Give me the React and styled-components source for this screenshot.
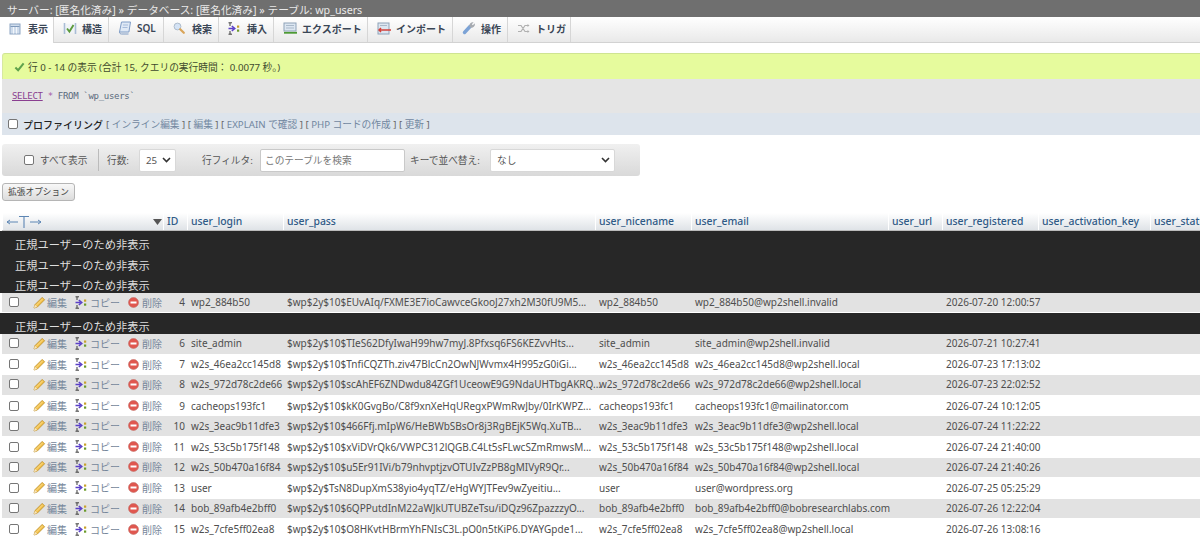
import React from "react";
import styled, { createGlobalStyle } from "styled-components";

const FONT = `"Noto Sans", "Noto Sans CJK JP", sans-serif`;

const Global = createGlobalStyle`
  html, body { margin: 0; padding: 0; background: #fff; overflow: hidden; height: 546px; }
  body { font-family: ${FONT}; font-size: 10px; color: #444; }
`;

const Page = styled.div`
  width: 1200px;
  height: 546px;
  overflow: hidden;
  display: flex;
  flex-direction: column;
`;

const TopBar = styled.div`
  height: 17px;
  background: #6f6f6f;
  color: #e9e9e9;
  font-size: 10.7px;
  line-height: 20px;
  padding-left: 7px;
  white-space: nowrap;
  overflow: hidden;
  flex: none;
`;

const Tabs = styled.nav`
  height: 26px;
  flex: none;
  display: flex;
  background: linear-gradient(#ffffff, #e9e9e9);
  border-bottom: 1px solid #d2d2d2;
  box-sizing: border-box;
`;

const Tab = styled.div`
  width: ${(p) => p.$w}px;
  box-sizing: border-box;
  display: flex;
  align-items: center;
  padding: 0 0 3px 9px;
  font-size: 10px;
  font-weight: 600;
  color: #3a4656;
  white-space: nowrap;
  border-right: 1px solid #d6d6d6;
  background: ${(p) => (p.$active ? "#fff" : "transparent")};
  height: ${(p) => (p.$active ? "26px" : "25px")};
`;

const TabIcon = styled.span`
  width: 19px;
  flex: none;
  display: flex;
  align-items: center;
`;

const Notice = styled.div`
  margin: 10px 0 0 2px;
  height: 26px;
  flex: none;
  box-sizing: border-box;
  background: #e6fb9d;
  border-top: 1px solid #cfe492;
  border-left: 1px solid #d7e8a0;
  border-radius: 3px 0 0 0;
  display: flex;
  align-items: center;
  gap: 3px;
  padding-left: 11px;
  font-size: 9.7px;
  color: #3f4a2d;
`;

const SqlBox = styled.div`
  margin-left: 2px;
  height: 34px;
  flex: none;
  background: #e5e5e5;
  display: flex;
  align-items: center;
  padding-left: 10px;
  font-family: "DejaVu Sans Mono", monospace;
  font-size: 9px;
  letter-spacing: -0.3px;
  color: #5a6a7d;
  gap: 5px;
`;

const Keyword = styled.span`
  color: #8a3f90;
  text-decoration: underline;
`;

const Star = styled.span`
  color: #a45aa8;
`;

const Profiling = styled.div`
  margin-left: 2px;
  height: 22px;
  flex: none;
  background: #dde4ec;
  display: flex;
  align-items: center;
  padding-left: 6px;
  gap: 3px;
  font-size: 9.7px;
  color: #333;
`;

const Box = styled.span`
  width: 10px;
  height: 10px;
  box-sizing: border-box;
  flex: none;
  display: inline-block;
  border: 1px solid #767676;
  border-radius: 2px;
  background: #fff;
`;

const ProfLabel = styled.span`
  margin-left: 2px;
  font-size: 10px;
  font-weight: 500;
  color: #222;
`;

const LinkText = styled.span`
  color: #7187a0;
`;

const Bracket = styled.span`
  color: #666;
`;

const FilterBar = styled.div`
  margin: 9px 0 0 2px;
  width: 638px;
  height: 32px;
  flex: none;
  box-sizing: border-box;
  border-radius: 3px;
  background: linear-gradient(#f0f0f0, #d9d9d9);
  display: flex;
  align-items: center;
  font-size: 9.7px;
  color: #555;
  white-space: nowrap;
`;

const ShowAll = styled.label`
  margin-left: 22px;
  display: flex;
  align-items: center;
  gap: 6px;
  width: 74px;
  height: 22px;
  border-right: 1px solid #bbb;
`;

const FilterLabel = styled.span`
  margin-left: ${(p) => p.$ml}px;
  width: ${(p) => p.$w}px;
`;

const FakeSelect = styled.div`
  width: ${(p) => p.$w}px;
  height: 23px;
  box-sizing: border-box;
  background: #fff;
  border: 1px solid #d8d8d8;
  border-radius: 2px;
  display: flex;
  align-items: center;
  justify-content: space-between;
  padding: 0 4px 0 6px;
  color: #555;
`;

const FakeInput = styled.div`
  width: 145px;
  height: 23px;
  box-sizing: border-box;
  background: #fff;
  border: 1px solid #c9c9c9;
  border-radius: 2px;
  display: flex;
  align-items: center;
  padding-left: 4px;
  color: #777;
`;

const OptionsButton = styled.div`
  margin: 7px 0 0 2px;
  width: 73px;
  height: 18px;
  flex: none;
  box-sizing: border-box;
  border: 1px solid #b5b5b5;
  border-radius: 3px;
  background: linear-gradient(#f8f8f8, #dcdcdc);
  font-size: 8.7px;
  line-height: 16px;
  text-align: center;
  color: #444;
  white-space: nowrap;
`;

const COLS = "161px 24px 96px 312px 96px 197px 54px 96px 112px 60px";

const TableWrap = styled.div`
  margin-top: 12px;
  flex: none;
  width: 1200px;
`;

const HeadRow = styled.div`
  display: grid;
  grid-template-columns: ${COLS};
  margin-left: 2px;
  height: 17px;
  border-bottom: 1px solid #bbb;
`;

const HeadCell = styled.div`
  background: linear-gradient(#ffffff, #dfe3e7);
  border-left: 1px solid #fff;
  padding-left: 3px;
  box-sizing: border-box;
  font-size: 10.4px;
  font-weight: 500;
  line-height: 17px;
  color: #2f5a86;
  white-space: nowrap;
  overflow: hidden;
`;

const ArrowCell = styled(HeadCell)`
  display: flex;
  align-items: center;
  justify-content: space-between;
  padding: 0 1px 0 3px;
`;

const Row = styled.div`
  display: grid;
  grid-template-columns: ${COLS};
  height: 20.6px;
  margin-left: 2px;
  padding-bottom: 1px;
  align-items: center;
  box-sizing: border-box;
  background: ${(p) => (p.$odd ? "#e2e2e2" : "#fff")};
  border-bottom: ${(p) => (p.$odd ? "1px solid #fff" : "0")};
  font-size: 10px;
  color: #4e4e4e;
  white-space: nowrap;
`;

const HiddenRow = styled.div`
  height: 20.6px;
  background: #272727;
  color: #dedede;
  font-size: 11.25px;
  line-height: 20px;
  padding: 4px 0 0 15px;
  box-sizing: border-box;
  overflow: hidden;
  white-space: nowrap;
`;

const Actions = styled.div`
  display: flex;
  align-items: center;
  padding-left: 7px;
  height: 100%;
`;

const Action = styled.span`
  display: flex;
  align-items: center;
  margin-left: ${(p) => p.$ml}px;
  gap: ${(p) => p.$gap}px;
  color: #75869a;
  svg { flex: none; }
`;

const IdCell = styled.div`
  text-align: right;
  padding-right: 2px;
`;

const Cell = styled.div`
  padding-left: 4px;
`;

const Check = () => (
  <svg width="11" height="11" viewBox="0 0 12 12">
    <path d="M1.5 7 L4.5 10 L10.5 2.5" fill="none" stroke="#5fa24c" strokeWidth="2.2" />
  </svg>
);

const IconTable = () => (
  <svg width="12" height="12" viewBox="0 0 12 12">
    <rect x="1" y="1" width="10" height="10" fill="#cfdcec" stroke="#8ea6c4" />
    <path d="M1.5 3.5h9" stroke="#7f99ba" />
    <path d="M4.5 4v6.5M7.5 4v6.5" stroke="#f2f6fb" fill="none" />
  </svg>
);
const IconStruct = () => (
  <svg width="14" height="13" viewBox="0 0 14 13">
    <path d="M1.5 1v11M12.5 1v11" stroke="#a9bdd6" strokeWidth="1.6" />
    <rect x="3" y="2" width="8" height="9" fill="#f0f4f8" />
    <path d="M4 6.5l2.4 3L10.5 3" fill="none" stroke="#5c9a3c" strokeWidth="1.9" />
  </svg>
);
const IconSql = () => (
  <svg width="13" height="14" viewBox="0 0 13 14">
    <path d="M3.5 1h9l-1.6 10H1.5z" fill="#dfe9f6" stroke="#7f9cc6" />
    <path d="M1.5 11c0 1.5 1 2 2 2h7" stroke="#7f9cc6" fill="none" />
    <path d="M5 4h5M4.5 6.5h5" stroke="#a7bcdb" />
  </svg>
);
const IconSearch = () => (
  <svg width="12" height="12" viewBox="0 0 12 12">
    <circle cx="4.5" cy="4.5" r="3.4" fill="#d4e3f5" stroke="#aebccc" />
    <path d="M7.2 7.2l3.6 3.6" stroke="#d9a55a" strokeWidth="2.2" strokeLinecap="round" />
  </svg>
);
const IconInsert = () => (
  <svg width="12" height="13" viewBox="0 0 12 13">
    <path d="M.5 .8h3.5M.5 12.2h3.5M2 1v3M2 9v3" stroke="#3c3c3c" fill="none" />
    <path d="M.5 6.5h5M3.8 4l3 2.5-3 2.5" stroke="#5a3fc8" strokeWidth="1.5" fill="none" />
    <rect x="9" y="3.5" width="2.2" height="2.2" fill="#c8a22a" />
    <rect x="9" y="7.5" width="2.2" height="2.2" fill="#6a9a2a" />
  </svg>
);
const IconExport = () => (
  <svg width="15" height="13" viewBox="0 0 15 13">
    <rect x="1" y="1" width="12" height="8" fill="#dce6f1" stroke="#8ea2b8" />
    <path d="M3 3.5h8M3 6h8" stroke="#a9b9ca" />
    <path d="M1 10.8h13" stroke="#4d9a34" strokeWidth="1.8" />
  </svg>
);
const IconImport = () => (
  <svg width="15" height="13" viewBox="0 0 15 13">
    <rect x="1" y="1" width="11" height="11" fill="#dce6f1" stroke="#8ea2b8" />
    <path d="M3 3.5h7" stroke="#a9b9ca" />
    <path d="M2 8h12M4 6L2 8l2 2" fill="none" stroke="#d2403a" strokeWidth="1.5" />
  </svg>
);
const IconWrench = () => (
  <svg width="14" height="14" viewBox="0 0 14 14">
    <path d="M2.5 11.5L8 5.5" stroke="#7ca3d6" strokeWidth="3.4" strokeLinecap="round" />
    <path d="M7.5 5.5a3.4 3.4 0 0 1 4.2-4.2L9.8 3.2l1 1 2-1.9a3.4 3.4 0 0 1-4.6 4.1z" fill="#a6aab0" />
  </svg>
);
const IconTrigger = () => (
  <svg width="13" height="11" viewBox="0 0 13 11">
    <path d="M1 2.5h3l4 6h3M1 8.5h3l4-6h3" fill="none" stroke="#b0b0b0" strokeWidth="1.2" />
    <path d="M10.5 1l2 1.5-2 1.5M10.5 7l2 1.5-2 1.5" fill="#b0b0b0" />
  </svg>
);
const Pencil = () => (
  <svg width="13" height="13" viewBox="0 0 13 13">
    <path d="M1 12l.9-3.3L9.2 1.4l2.4 2.4L4.3 11.1z" fill="#f3c04a" stroke="#b98a22" strokeWidth=".8" />
    <path d="M1 12l.9-3.3 2.4 2.4z" fill="#f7e6c2" />
    <path d="M3 9.5L9.8 2.7" stroke="#fbe29a" strokeWidth=".8" />
  </svg>
);
const Del = () => (
  <svg width="11" height="11" viewBox="0 0 11 11">
    <circle cx="5.5" cy="5.5" r="5" fill="#e0574f" stroke="#c2706a" strokeWidth=".6" />
    <rect x="2.5" y="4.5" width="6" height="2" fill="#fff" />
  </svg>
);
const Chevron = () => (
  <svg width="9" height="6" viewBox="0 0 9 6">
    <path d="M1 1l3.5 3.5L8 1" fill="none" stroke="#333" strokeWidth="1.6" />
  </svg>
);
const TArrows = () => (
  <svg width="36" height="13" viewBox="0 0 36 13">
    <path d="M1 7h11M1 7l3-2M1 7l3 2M24 7h11M35 7l-3-2M35 7l-3 2" fill="none" stroke="#5d86b4" />
    <path d="M13 1.5h10M18 1.5V13" fill="none" stroke="#5d86b4" strokeWidth="1.1" />
  </svg>
);
const SortDown = () => (
  <svg width="9" height="6" viewBox="0 0 9 6">
    <path d="M0 0h9L4.5 6z" fill="#555" />
  </svg>
);

const TABS = [
  ["表示", 54, IconTable],
  ["構造", 55, IconStruct],
  ["SQL", 55, IconSql],
  ["検索", 55, IconSearch],
  ["挿入", 55, IconInsert],
  ["エクスポート", 94, IconExport],
  ["インポート", 85, IconImport],
  ["操作", 55, IconWrench],
  ["トリガ", 63, IconTrigger],
];

const COLUMNS = ["ID", "user_login", "user_pass", "user_nicename", "user_email", "user_url", "user_registered", "user_activation_key", "user_status"];

const ROWS = [
  null, null, null,
  [4, "wp2_884b50", "$wp$2y$10$EUvAIq/FXME3E7ioCawvceGkooJ27xh2M30fU9M5...", "wp2_884b50", "wp2_884b50@wp2shell.invalid", "2026-07-20 12:00:57"],
  null,
  [6, "site_admin", "$wp$2y$10$TIeS62DfyIwaH99hw7myJ.8Pfxsq6FS6KEZvvHts...", "site_admin", "site_admin@wp2shell.invalid", "2026-07-21 10:27:41"],
  [7, "w2s_46ea2cc145d8", "$wp$2y$10$TnfiCQZTh.ziv47BlcCn2OwNJWvmx4H995zG0iGi...", "w2s_46ea2cc145d8", "w2s_46ea2cc145d8@wp2shell.local", "2026-07-23 17:13:02"],
  [8, "w2s_972d78c2de66", "$wp$2y$10$scAhEF6ZNDwdu84ZGf1UceowE9G9NdaUHTbgAKRQ...", "w2s_972d78c2de66", "w2s_972d78c2de66@wp2shell.local", "2026-07-23 22:02:52"],
  [9, "cacheops193fc1", "$wp$2y$10$kK0GvgBo/C8f9xnXeHqURegxPWmRwJby/0IrKWPZ...", "cacheops193fc1", "cacheops193fc1@mailinator.com", "2026-07-24 10:12:05"],
  [10, "w2s_3eac9b11dfe3", "$wp$2y$10$466Ffj.mIpW6/HeBWbSBsOr8j3RgBEjK5Wq.XuTB...", "w2s_3eac9b11dfe3", "w2s_3eac9b11dfe3@wp2shell.local", "2026-07-24 11:22:22"],
  [11, "w2s_53c5b175f148", "$wp$2y$10$xViDVrQk6/VWPC312lQGB.C4Lt5sFLwcSZmRmwsM...", "w2s_53c5b175f148", "w2s_53c5b175f148@wp2shell.local", "2026-07-24 21:40:00"],
  [12, "w2s_50b470a16f84", "$wp$2y$10$u5Er91IVi/b79nhvptjzvOTUIvZzPB8gMIVyR9Qr...", "w2s_50b470a16f84", "w2s_50b470a16f84@wp2shell.local", "2026-07-24 21:40:26"],
  [13, "user", "$wp$2y$TsN8DupXmS38yio4yqTZ/eHgWYJTFev9wZyeitiu...", "user", "user@wordpress.org", "2026-07-25 05:25:29"],
  [14, "bob_89afb4e2bff0", "$wp$2y$10$6QPPutdInM22aWJkUTUBZeTsu/iDQz96ZpazzzyO...", "bob_89afb4e2bff0", "bob_89afb4e2bff0@bobresearchlabs.com", "2026-07-26 12:22:04"],
  [15, "w2s_7cfe5ff02ea8", "$wp$2y$10$O8HKvtHBrmYhFNIsC3L.pO0n5tKiP6.DYAYGpde1...", "w2s_7cfe5ff02ea8", "w2s_7cfe5ff02ea8@wp2shell.local", "2026-07-26 13:08:16"],
];

export default function App() {
  return (
    <Page>
      <Global />
      <TopBar>サーバー: [匿名化済み] » データベース: [匿名化済み] » テーブル: wp_users</TopBar>
      <Tabs>
        {TABS.map(([label, w, Icon], i) => (
          <Tab key={label} $w={w} $active={i === 0}>
            <TabIcon><Icon /></TabIcon>
            {label}
          </Tab>
        ))}
      </Tabs>
      <Notice>
        <Check />
        行 0 - 14 の表示 (合計 15, クエリの実行時間： 0.0077 秒。)
      </Notice>
      <SqlBox>
        <Keyword>SELECT</Keyword>
        <Star>*</Star>
        <span>FROM</span>
        <span>`wp_users`</span>
      </SqlBox>
      <Profiling>
        <Box />
        <ProfLabel>プロファイリング</ProfLabel>
        <span>
          <Bracket>[ </Bracket>
          <LinkText>インライン編集</LinkText>
          <Bracket> ] [ </Bracket>
          <LinkText>編集</LinkText>
          <Bracket> ] [ </Bracket>
          <LinkText>EXPLAIN で確認</LinkText>
          <Bracket> ] [ </Bracket>
          <LinkText>PHP コードの作成</LinkText>
          <Bracket> ] [ </Bracket>
          <LinkText>更新</LinkText>
          <Bracket> ]</Bracket>
        </span>
      </Profiling>
      <FilterBar>
        <ShowAll>
          <Box />
          すべて表示
        </ShowAll>
        <FilterLabel $ml={8} $w={32}>行数:</FilterLabel>
        <FakeSelect $w={37}>
          25
          <Chevron />
        </FakeSelect>
        <FilterLabel $ml={26} $w={58}>行フィルタ:</FilterLabel>
        <FakeInput>このテーブルを検索</FakeInput>
        <FilterLabel $ml={5} $w={80}>キーで並べ替え:</FilterLabel>
        <FakeSelect $w={125}>
          なし
          <Chevron />
        </FakeSelect>
      </FilterBar>
      <OptionsButton>拡張オプション</OptionsButton>
      <TableWrap>
        <HeadRow>
          <ArrowCell>
            <TArrows />
            <SortDown />
          </ArrowCell>
          {COLUMNS.map((c) => (
            <HeadCell key={c}>{c}</HeadCell>
          ))}
        </HeadRow>
        {ROWS.map((r, i) =>
          r === null ? (
            <HiddenRow key={i}>正規ユーザーのため非表示</HiddenRow>
          ) : (
            <Row key={i} $odd={i % 2 === 1}>
              <Actions>
                <Box />
                <Action $ml={14} $gap={1}><Pencil />編集</Action>
                <Action $ml={8} $gap={3}><IconInsert />コピー</Action>
                <Action $ml={8} $gap={3}><Del />削除</Action>
              </Actions>
              <IdCell>{r[0]}</IdCell>
              <Cell>{r[1]}</Cell>
              <Cell>{r[2]}</Cell>
              <Cell>{r[3]}</Cell>
              <Cell>{r[4]}</Cell>
              <Cell />
              <Cell>{r[5]}</Cell>
              <Cell />
              <Cell />
            </Row>
          )
        )}
      </TableWrap>
    </Page>
  );
}
